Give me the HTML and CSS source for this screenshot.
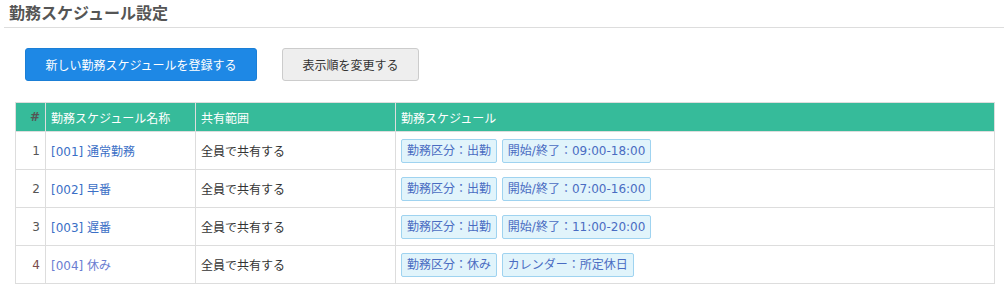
FILE: index.html
```html
<!DOCTYPE html>
<html lang="ja">
<head>
    <meta charset="UTF-8">
    <title>勤務スケジュール設定</title>
    <link rel="stylesheet" href="styles.css">
</head>
<body>
    <h1 class="page-title">勤務スケジュール設定</h1>

    <div class="content">
        <div class="actions">
            <button class="btn btn-primary">新しい勤務スケジュールを登録する</button>
            <button class="btn btn-default">表示順を変更する</button>
        </div>

        <table class="schedule-table">
            <thead>
                <tr>
                    <th class="col-no">#</th>
                    <th class="col-name">勤務スケジュール名称</th>
                    <th class="col-share">共有範囲</th>
                    <th>勤務スケジュール</th>
                </tr>
            </thead>
            <tbody>
                <tr>
                    <td class="col-no">1</td>
                    <td><a href="#">[001] 通常勤務</a></td>
                    <td>全員で共有する</td>
                    <td>
                        <span class="tag">勤務区分：出勤</span>
                        <span class="tag">開始/終了：09:00-18:00</span>
                    </td>
                </tr>
                <tr>
                    <td class="col-no">2</td>
                    <td><a href="#">[002] 早番</a></td>
                    <td>全員で共有する</td>
                    <td>
                        <span class="tag">勤務区分：出勤</span>
                        <span class="tag">開始/終了：07:00-16:00</span>
                    </td>
                </tr>
                <tr>
                    <td class="col-no">3</td>
                    <td><a href="#">[003] 遅番</a></td>
                    <td>全員で共有する</td>
                    <td>
                        <span class="tag">勤務区分：出勤</span>
                        <span class="tag">開始/終了：11:00-20:00</span>
                    </td>
                </tr>
                <tr class="holiday">
                    <td class="col-no">4</td>
                    <td><a href="#">[004] 休み</a></td>
                    <td>全員で共有する</td>
                    <td>
                        <span class="tag">勤務区分：休み</span>
                        <span class="tag">カレンダー：所定休日</span>
                    </td>
                </tr>
            </tbody>
        </table>
    </div>
</body>
</html>
```

FILE: styles.css
```css
body {
    margin: 0;
    font-family: "DejaVu Sans", "Noto Sans CJK JP", sans-serif;
    font-size: 12px;
    color: #333;
    background: #fff;
}
.page-title {
    margin: 0 0 0 4px;
    padding: 3px 5px 3px;
    font-size: 16px;
    line-height: 21px;
    font-weight: bold;
    color: #555;
    border-bottom: 1px solid #ddd;
}
.content {
    padding: 20px 9px 0 15px;
}
.actions {
    display: flex;
    gap: 25px;
    padding-left: 10px;
    margin-bottom: 21px;
}
.btn {
    font-family: inherit;
    font-size: 12px;
    height: 33px;
    border-radius: 3px;
    cursor: pointer;
}
.btn-primary {
    width: 232px;
    background-color: #1e88e5;
    border: 1px solid #1b7fd6;
    color: #fff;
}
.btn-default {
    width: 137px;
    background-color: #eee;
    border: 1px solid #ccc;
    color: #333;
}
.schedule-table {
    width: 100%;
    border-collapse: collapse;
    border: 1px solid #ddd;
}
.schedule-table th {
    background-color: #36bb9a;
    color: #fff;
    font-weight: normal;
    text-align: left;
    height: 28px;
    padding: 0 5px;
    border: 1px solid #ddd;
}
.schedule-table th.col-no {
    font-weight: bold;
}
.schedule-table td {
    height: 37px;
    padding: 0 5px;
    border: 1px solid #ddd;
    vertical-align: middle;
}
.schedule-table .col-no {
    width: 19px;
    text-align: right;
    color: #555;
}
.col-name {
    width: 139px;
}
.col-share {
    width: 189px;
}
.schedule-table a {
    color: #3b6fc6;
    text-decoration: none;
}
.holiday .col-no {
    color: #7a4b4b;
}
.holiday a {
    color: #6b7dd1;
}
.tag {
    display: inline-block;
    height: 22px;
    line-height: 22px;
    padding: 0 5px;
    margin-right: 1px;
    background-color: #e1f4fb;
    border: 1px solid #9fd3f0;
    border-radius: 2px;
    color: #4a6cc2;
}
```
